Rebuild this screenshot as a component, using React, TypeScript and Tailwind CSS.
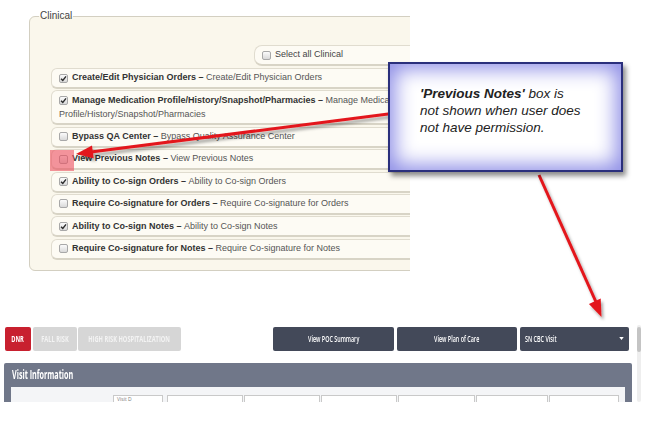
import React from "react";

type Perm = {
  checked: boolean;
  title: string;
  desc: string;
  cont?: string;
};

const perms: Perm[] = [
  { checked: true, title: "Create/Edit Physician Orders", desc: "Create/Edit Physician Orders" },
  {
    checked: true,
    title: "Manage Medication Profile/History/Snapshot/Pharmacies",
    desc: "Manage Medication",
    cont: "Profile/History/Snapshot/Pharmacies",
  },
  { checked: false, title: "Bypass QA Center", desc: "Bypass Quality Assurance Center" },
  { checked: false, title: "View Previous Notes", desc: "View Previous Notes" },
  { checked: true, title: "Ability to Co-sign Orders", desc: "Ability to Co-sign Orders" },
  { checked: false, title: "Require Co-signature for Orders", desc: "Require Co-signature for Orders" },
  { checked: true, title: "Ability to Co-sign Notes", desc: "Ability to Co-sign Notes" },
  { checked: false, title: "Require Co-signature for Notes", desc: "Require Co-signature for Notes" },
];

function Check({ checked }: { checked: boolean }) {
  return (
    <span className="flex h-[9px] w-[9px] shrink-0 items-center justify-center rounded-[2px] border border-[#a8a8a8] bg-linear-to-b from-[#fbfbfb] to-[#d9d9d9]">
      {checked && (
        <svg viewBox="0 0 10 10" className="h-[7px] w-[7px]">
          <path d="M1.5 5.2 L4 7.8 L8.6 2" stroke="#2b2b2b" strokeWidth="2" fill="none" />
        </svg>
      )}
    </span>
  );
}

function PermRow({ p }: { p: Perm }) {
  if (p.cont) {
    return (
      <div className="flex h-[35px] flex-col justify-center rounded-[6px] border border-b-2 border-[#e0dccf] border-b-[#d8d4c6] bg-[#fdfbf4] pl-[7px] leading-[14px] whitespace-nowrap">
        <div className="flex items-center gap-[4px]">
          <Check checked={p.checked} />
          <span>
            <b className="text-[#333]">{p.title} – </b>
            <span className="text-[#555]">{p.desc}</span>
          </span>
        </div>
        <span className="text-[#555]">{p.cont}</span>
      </div>
    );
  }
  return (
    <div className="flex h-[21px] items-center gap-[4px] rounded-[6px] border border-b-2 border-[#e0dccf] border-b-[#d8d4c6] bg-[#fdfbf4] pl-[7px] whitespace-nowrap">
      <Check checked={p.checked} />
      <span>
        <b className="text-[#333]">{p.title} – </b>
        <span className="text-[#555]">{p.desc}</span>
      </span>
    </div>
  );
}

function Narrow({ children, left }: { children: React.ReactNode; left?: boolean }) {
  return (
    <span
      className={
        left
          ? "inline-block origin-left scale-x-[0.6] whitespace-nowrap"
          : "inline-block scale-x-[0.6] whitespace-nowrap"
      }
    >
      {children}
    </span>
  );
}

export default function App() {
  return (
    <div className="relative h-[435px] w-[660px] overflow-hidden bg-white font-['Liberation_Sans',Arial,sans-serif]">
      {/* Clinical permissions panel (cropped on the right) */}
      <div className="pl-[29px] pt-[10px]">
        <div className="w-[381px] overflow-hidden">
          <fieldset className="w-[470px] rounded-[6px] border border-[#d3cfc1] bg-[#faf7ec] px-[21px] pb-[10px] text-[9px]">
            <legend className="-ml-[12px] px-[1px] text-[10px] leading-[12px] text-[#444]">Clinical</legend>
            <div className="mt-[23px] ml-[203px] flex h-[21px] items-center gap-[4px] rounded-[8px] border border-b-2 border-[#e0dccf] border-b-[#d8d4c6] bg-[#fdfbf4] pl-[7px] text-[#444]">
              <Check checked={false} />
              <span>Select all Clinical</span>
            </div>
            <div className="mt-[2px] flex flex-col gap-[1.4px]">
              {perms.map((p) => (
                <PermRow key={p.title} p={p} />
              ))}
            </div>
          </fieldset>
        </div>
      </div>

      {/* Visit screen excerpt */}
      <div className="mt-[54px] flex h-[77px] items-start overflow-hidden font-['Open_Sans',sans-serif]">
        <div className="w-[632px]">
          <div className="mt-[2px] flex h-[24px] pl-[5px] text-[9.5px] font-bold text-white">
            <div className="flex w-[26px] items-center justify-center rounded-[2px] bg-[#c8202f]">
              <Narrow>DNR</Narrow>
            </div>
            <div className="ml-[2px] flex w-[44px] items-center justify-center rounded-[2px] bg-[#d6d6d6] text-[#f3f3f3]">
              <Narrow>FALL RISK</Narrow>
            </div>
            <div className="ml-[1px] flex w-[103px] items-center justify-center rounded-[2px] bg-[#d6d6d6] text-[#f3f3f3]">
              <Narrow>HIGH RISK HOSPITALIZATION</Narrow>
            </div>
            <div className="ml-[92px] flex w-[121px] items-center justify-center rounded-[2px] bg-[#434959] text-[9px] font-semibold">
              <Narrow>View POC Summary</Narrow>
            </div>
            <div className="ml-[3px] flex w-[120px] items-center justify-center rounded-[2px] bg-[#434959] text-[9px] font-semibold">
              <Narrow>View Plan of Care</Narrow>
            </div>
            <div className="ml-[3px] flex w-[109px] items-center justify-between rounded-[2px] bg-[#434959] pl-[5px] pr-[5px] text-[9px] font-semibold">
              <Narrow left>SN CBC Visit</Narrow>
              <svg viewBox="0 0 6 4" className="h-[3px] w-[5px]">
                <path d="M0 0 H6 L3 4 Z" fill="#fff" />
              </svg>
            </div>
          </div>
          <div className="mt-[12px] ml-[4px] w-[628px] rounded-t-[2px] bg-[#707789] px-[7px]">
            <div className="flex h-[24px] items-center pl-[1px] text-[12px] font-bold text-white">
              <Narrow left>Visit Information</Narrow>
            </div>
            <div className="flex h-[20px] gap-[1px] bg-[#f4f5f7] pl-[102px] pt-[8px]">
              <div className="w-[50px] border border-[#c9c9c9] bg-white pl-[3px] text-[5px] leading-[6px] text-[#777]">Visit D</div>
              <div className="ml-[3px] w-[76px] border border-[#c9c9c9] bg-white" />
              <div className="w-[76px] border border-[#c9c9c9] bg-white" />
              <div className="w-[76px] border border-[#c9c9c9] bg-white" />
              <div className="w-[77px] border border-[#c9c9c9] bg-white" />
              <div className="w-[72px] border border-[#c9c9c9] bg-white" />
              <div className="w-[70px] border border-[#c9c9c9] bg-white" />
            </div>
          </div>
        </div>
        <div className="ml-[5px] h-[77px] w-[4px] rounded-[2px] bg-[#eeeeee]">
          <div className="mt-[2px] h-[25px] w-[4px] rounded-[2px] bg-[#c4c4c4]" />
        </div>
      </div>

      {/* highlight on hidden checkbox */}
      <div className="absolute left-[50px] top-[150px] h-[21px] w-[24px] bg-[#ec4f5f]/60" />

      {/* arrows */}
      <svg className="pointer-events-none absolute left-0 top-0" width="660" height="435">
        <defs>
          <filter id="sh" x="-20%" y="-20%" width="140%" height="140%">
            <feDropShadow dx="2" dy="3" stdDeviation="1.4" floodColor="#000" floodOpacity="0.35" />
          </filter>
        </defs>
        <g filter="url(#sh)" fill="#e3161c" stroke="#e3161c">
          <line x1="392" y1="113.5" x2="91" y2="152" strokeWidth="3" />
          <polygon points="76,154 93.7,158.3 92,145.4" stroke="none" />
          <line x1="539" y1="175" x2="596" y2="302" strokeWidth="3" />
          <polygon points="601.5,317 588.9,303.9 600.7,298.6" stroke="none" />
        </g>
      </svg>

      {/* callout */}
      <div className="absolute left-[388px] top-[62px] h-[110px] w-[235px] border-2 border-[#2a2f7c] bg-white pl-[30px] pt-[21px] text-[13.5px] leading-[17px] text-[#222] italic shadow-[inset_0_0_20px_5px_#8d8de6,3px_4px_5px_rgba(0,0,0,0.45)]">
        <b>'Previous Notes'</b> box is
        <br />
        not shown when user does
        <br />
        not have permission.
      </div>
    </div>
  );
}
